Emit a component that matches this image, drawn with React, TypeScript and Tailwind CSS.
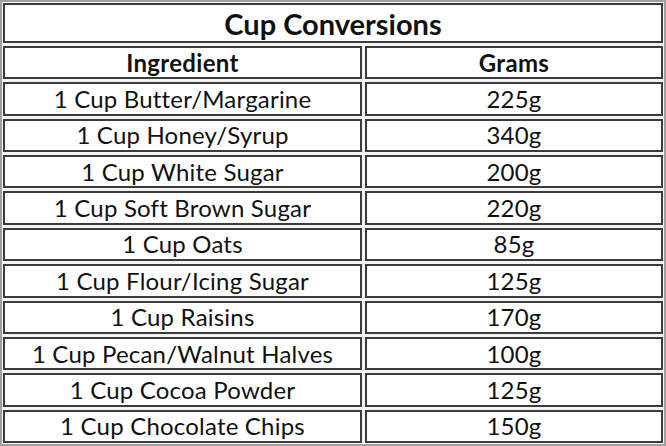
import React from "react";

const rows: [string, string][] = [
  ["1 Cup Butter/Margarine", "225g"],
  ["1 Cup Honey/Syrup", "340g"],
  ["1 Cup White Sugar", "200g"],
  ["1 Cup Soft Brown Sugar", "220g"],
  ["1 Cup Oats", "85g"],
  ["1 Cup Flour/Icing Sugar", "125g"],
  ["1 Cup Raisins", "170g"],
  ["1 Cup Pecan/Walnut Halves", "100g"],
  ["1 Cup Cocoa Powder", "125g"],
  ["1 Cup Chocolate Chips", "150g"],
];

const cell =
  "flex items-center justify-center border-2 border-[#3c3c3c] bg-white leading-none";

export default function App() {
  return (
    <div
      className="w-[666px] h-[446px] bg-white text-[#111]"
      style={{ fontFamily: "Lato, 'Open Sans', sans-serif" }}
    >
      <div className="flex h-full flex-col gap-[3px] border-2 border-[#a0a0a0] bg-[#f4f4f4] p-px">
        <div className={`${cell} h-[40px] text-[29px] font-bold`}>Cup Conversions</div>
        <div className="grid flex-1 grid-cols-[359px_1fr] gap-[3px]">
          <div className={`${cell} text-[24px] font-bold tracking-[0.3px]`}>Ingredient</div>
          <div className={`${cell} text-[24px] font-bold tracking-[0.3px]`}>Grams</div>
        </div>
        {rows.map(([name, grams]) => (
          <div key={name} className="grid flex-1 grid-cols-[359px_1fr] gap-[3px]">
            <div className={`${cell} text-[24px] tracking-[0.2px]`}>{name}</div>
            <div className={`${cell} text-[24px] tracking-[0.2px]`}>{grams}</div>
          </div>
        ))}
      </div>
    </div>
  );
}
